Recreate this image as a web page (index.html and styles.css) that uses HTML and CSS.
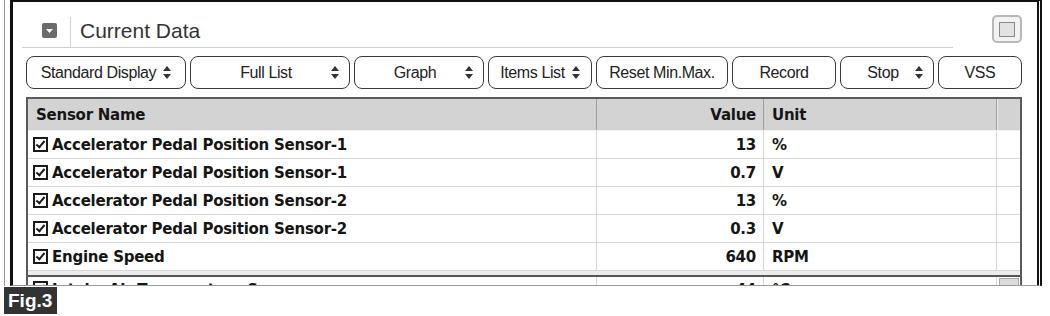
FILE: index.html
```html
<!DOCTYPE html>
<html>
<head>
    <meta charset="utf-8">
    <link rel="stylesheet" href="styles.css">
    <title>Current Data</title>
</head>
<body>
<div class="shot">
    <div class="frame">
        <div class="titlebar">
            <div class="title">
                <svg class="collapse" width="15" height="15" viewBox="0 0 15 15">
                    <rect x="0" y="0" width="15" height="15" rx="2" fill="#6b6b6b"/>
                    <polygon points="4,6 11,6 7.5,10" fill="#fff"/>
                </svg>
                <span class="sep"></span>
                <h1>Current Data</h1>
            </div>
            <div class="winbtn"><span></span></div>
        </div>

        <div class="toolbar">
            <div class="btn">Standard Display <span class="arr"></span></div>
            <div class="btn wide"><span class="label">Full List</span><span class="arr"></span></div>
            <div class="btn wide"><span class="label">Graph</span><span class="arr"></span></div>
            <div class="btn">Items List <span class="arr"></span></div>
            <div class="btn">Reset Min.Max.</div>
            <div class="btn">Record</div>
            <div class="btn wide"><span class="label">Stop</span><span class="arr"></span></div>
            <div class="btn">VSS</div>
        </div>

        <div class="grid">
            <div class="row head">
                <div class="name">Sensor Name</div>
                <div class="val">Value</div>
                <div class="unit">Unit</div>
                <div></div>
            </div>
            <div class="row">
                <div class="name"><span class="chk"></span>Accelerator Pedal Position Sensor-1</div>
                <div class="val">13</div>
                <div class="unit">%</div>
                <div></div>
            </div>
            <div class="row">
                <div class="name"><span class="chk"></span>Accelerator Pedal Position Sensor-1</div>
                <div class="val">0.7</div>
                <div class="unit">V</div>
                <div></div>
            </div>
            <div class="row">
                <div class="name"><span class="chk"></span>Accelerator Pedal Position Sensor-2</div>
                <div class="val">13</div>
                <div class="unit">%</div>
                <div></div>
            </div>
            <div class="row">
                <div class="name"><span class="chk"></span>Accelerator Pedal Position Sensor-2</div>
                <div class="val">0.3</div>
                <div class="unit">V</div>
                <div></div>
            </div>
            <div class="row">
                <div class="name"><span class="chk"></span>Engine Speed</div>
                <div class="val">640</div>
                <div class="unit">RPM</div>
                <div></div>
            </div>
            <div class="split"></div>
            <div class="row cut">
                <div class="name"><span class="chk"></span>Intake Air Temperature Sensor</div>
                <div class="val">44</div>
                <div class="unit">&deg;C</div>
                <div><span class="scroll"></span></div>
            </div>
        </div>
    </div>
</div>
<div class="fig">Fig.3</div>
</body>
</html>
```

FILE: styles.css
```css
body {
    margin: 0;
    background: #fff;
    font-family: "Liberation Sans", Arial, sans-serif;
    color: #222;
}
.shot {
    margin-left: 4px;
    padding-left: 5px;
    border-left: 1px solid #9a9a9a;
}
.frame {
    box-sizing: border-box;
    width: 1032px;
    height: 286px;
    padding: 0 15px 0 13px;
    border-left: 3px solid #111;
    border-top: 2px solid #111;
    border-right: 5px double #111;
    border-bottom: 1px solid #999;
    overflow: hidden;
}

/* title */
.titlebar {
    display: flex;
    align-items: flex-start;
    height: 46px;
}
.title {
    flex: 1;
    box-sizing: border-box;
    height: 46px;
    margin: 0 39px 0 -4px;
    padding: 12px 0 0 20px;
    border-bottom: 1px solid #cfcfcf;
    display: flex;
    align-items: center;
}
.sep {
    align-self: stretch;
    width: 1px;
    margin: 3px 9px 0 13px;
    background: #d0d0d0;
}
.title h1 {
    margin: 0;
    font-size: 21px;
    font-weight: normal;
    color: #333;
}
.winbtn {
    box-sizing: border-box;
    width: 30px;
    height: 28px;
    margin-top: 13px;
    border: 2px solid #b8b8b8;
    border-radius: 5px;
    background: #f2f2f2;
    display: flex;
    align-items: center;
    justify-content: center;
}
.winbtn span {
    width: 14px;
    height: 13px;
    border: 1px solid #8a8a8a;
    background: #e2e2e2;
}

/* toolbar */
.toolbar {
    display: grid;
    grid-template-columns: 160px 160px 130px 104px 132px 104px 94px 1fr;
    gap: 4px;
    margin-top: 8px;
}
.btn {
    box-sizing: border-box;
    height: 33px;
    border: 1.5px solid #3a3a3a;
    border-radius: 8px;
    display: flex;
    align-items: center;
    justify-content: center;
    gap: 7px;
    font-size: 16px;
    letter-spacing: -0.4px;
    color: #222;
    white-space: nowrap;
}
.btn.wide {
    padding: 0 10px 0 17px;
}
.btn.wide .label {
    flex: 1;
    text-align: center;
}
.arr {
    display: inline-flex;
    flex-direction: column;
    gap: 3px;
}
.arr::before,
.arr::after {
    content: "";
    border-left: 4px solid transparent;
    border-right: 4px solid transparent;
}
.arr::before {
    border-bottom: 5px solid #333;
}
.arr::after {
    border-top: 5px solid #333;
}

/* data grid */
.grid {
    margin-top: 8px;
    border: 2px solid #5a5a5a;
    border-bottom: none;
    font-family: "DejaVu Sans", sans-serif;
    font-weight: bold;
    font-size: 15px;
    letter-spacing: -0.25px;
    color: #151515;
}
.row {
    box-sizing: border-box;
    display: grid;
    grid-template-columns: 569px 167px 233px 1fr;
    height: 28px;
    border-bottom: 1px solid #d6d6d6;
}
.row > div {
    display: flex;
    align-items: center;
    border-right: 1px solid #d6d6d6;
    white-space: nowrap;
}
.row > div:last-child {
    border-right: none;
}
.name {
    padding-left: 5px;
}
.val {
    justify-content: flex-end;
    padding-right: 7px;
}
.unit {
    padding-left: 8px;
}
.head {
    height: 32px;
    background: #d3d3d3;
    border-bottom: 1px solid #f2f2f2;
}
.head > div {
    border-right: 1px solid #9c9c9c;
}
.head > div:last-child {
    border-left: 1px solid #ececec;
}
.head .name {
    padding-left: 8px;
}
.chk {
    position: relative;
    box-sizing: border-box;
    width: 15px;
    height: 15px;
    margin-right: 4px;
    border: 2px solid #1a1a1a;
    flex: none;
}
.chk::after {
    content: "";
    position: absolute;
    left: 3px;
    top: 0;
    width: 3px;
    height: 7px;
    border-right: 2px solid #1a1a1a;
    border-bottom: 2px solid #1a1a1a;
    transform: rotate(40deg);
}
.split {
    height: 4px;
    background: #ececec;
    border-bottom: 2px solid #555;
}
.row.cut > div {
    align-items: flex-start;
    padding-top: 4px;
}
.row.cut > div:last-child {
    padding-top: 1px;
}
.scroll {
    width: 18px;
    height: 14px;
    margin-left: 2px;
    background: #dcdcdc;
    border: 1px solid #a8a8a8;
}

.fig {
    display: inline-block;
    margin: 1px 0 0 4px;
    padding: 3px 5px 3px 4px;
    background: #333;
    color: #fff;
    font-weight: bold;
    font-size: 19px;
    line-height: 21px;
}
```
